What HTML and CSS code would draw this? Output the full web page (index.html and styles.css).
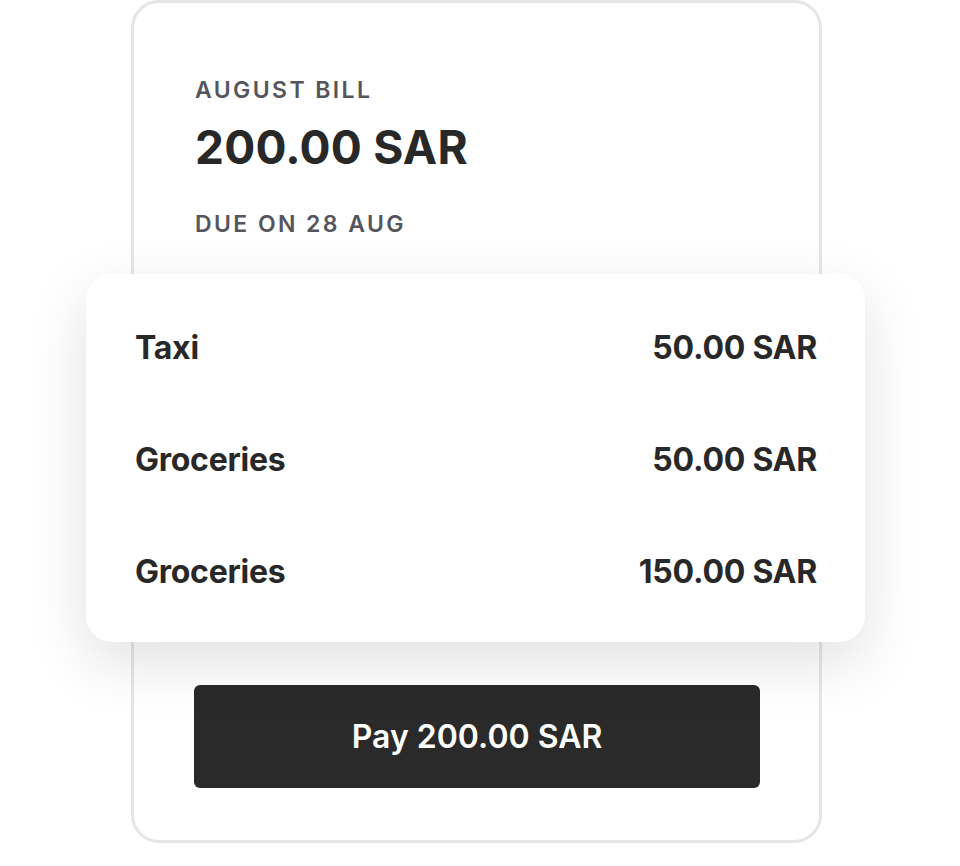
FILE: index.html
```html
<!DOCTYPE html>
<html lang="en">
<head>
    <meta charset="UTF-8">
    <meta name="viewport" content="width=device-width, initial-scale=1.0">
    <title>August Bill</title>
    <link rel="stylesheet" href="styles.css">
</head>
<body>
    <div class="bill">
        <div class="billHeader">
            <div class="label">August Bill</div>
            <div class="total">200.00 SAR</div>
            <div class="label due">Due on 28 Aug</div>
        </div>

        <!-- Items sheet sits wider than the bill card -->
        <div class="items">
            <div class="itemRow">
                <span>Taxi</span>
                <span>50.00 SAR</span>
            </div>
            <div class="itemRow">
                <span>Groceries</span>
                <span>50.00 SAR</span>
            </div>
            <div class="itemRow">
                <span>Groceries</span>
                <span>150.00 SAR</span>
            </div>
        </div>

        <div class="payArea">
            <button class="payButton">Pay 200.00 SAR</button>
        </div>
    </div>
</body>
</html>
```

FILE: styles.css
```css
body {
    margin: 0;
    font-family: Inter, "Noto Sans", sans-serif;
    background-color: #fff;
    color: #282828;
}
.bill {
    width: 685px;
    margin: 0 0 0 131px;
    border: 3px solid #e5e5ea;
    border-radius: 28px;
    background-color: #fff;
}
.billHeader {
    padding: 73px 61px 0;
}
.label {
    font-size: 23px;
    line-height: 28px;
    font-weight: 600;
    letter-spacing: 0.105em;
    text-transform: uppercase;
    color: #55555d;
}
.total {
    margin-top: 15px;
    font-size: 46px;
    line-height: 56px;
    font-weight: 700;
    letter-spacing: 0.005em;
}
.due {
    margin-top: 35px;
}
.items {
    margin: 36px -46px 0 -48px;
    padding: 54px 48px 51px 49px;
    background-color: #fff;
    border-radius: 26px;
    box-shadow: 0 20px 60px rgba(0, 0, 0, 0.12);
    display: flex;
    flex-direction: column;
    gap: 73px;
    position: relative;
}
.itemRow {
    display: flex;
    justify-content: space-between;
    font-size: 32px;
    line-height: 39px;
    font-weight: 700;
    letter-spacing: -0.008em;
}
.payArea {
    padding: 43px 59px 52px 60px;
}
.payButton {
    display: block;
    width: 100%;
    height: 103px;
    border: none;
    border-radius: 6px;
    background-color: #2a2a2a;
    color: #fff;
    font-family: Inter, "Noto Sans", sans-serif;
    font-size: 32px;
    font-weight: 600;
    cursor: pointer;
}
```
